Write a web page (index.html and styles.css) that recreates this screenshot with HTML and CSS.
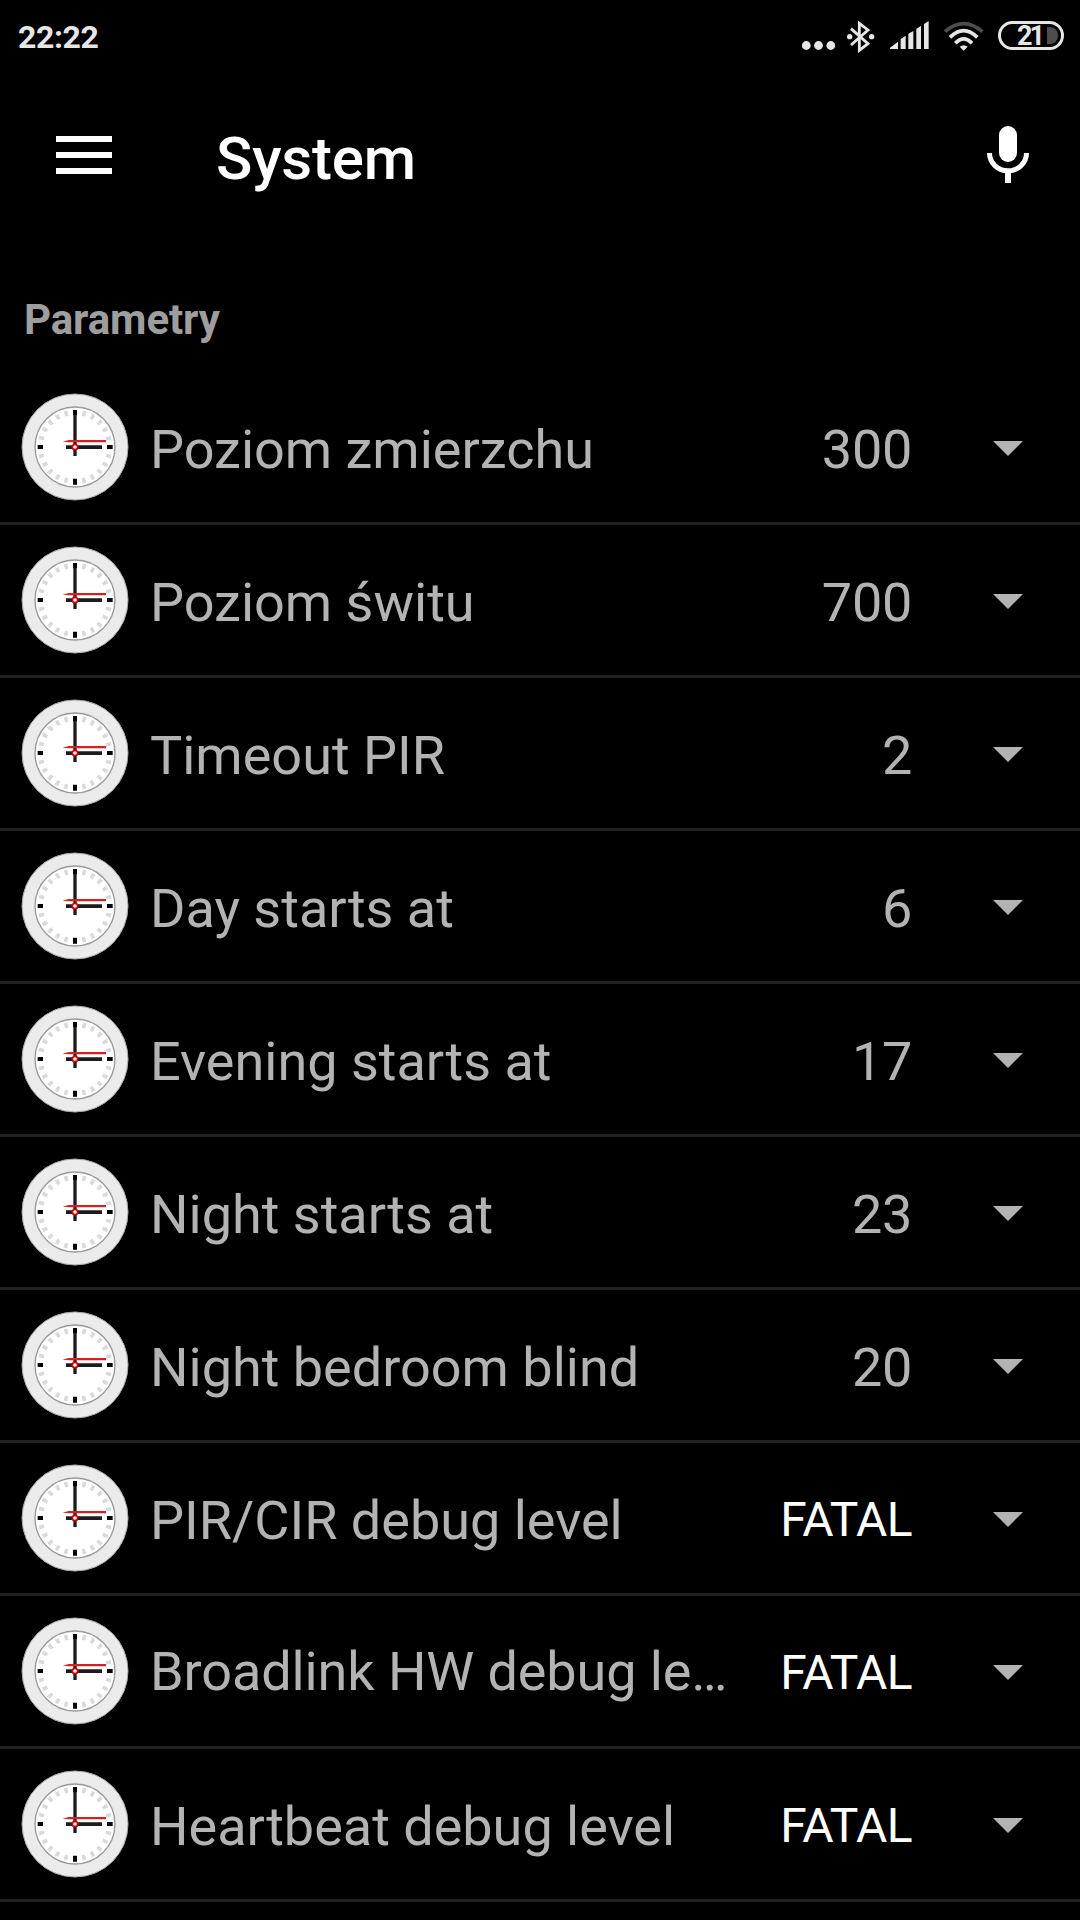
FILE: index.html
```html
<!DOCTYPE html>
<html lang="pl">
<head>
<meta charset="utf-8">
<title>System</title>
<link rel="stylesheet" href="styles.css">
</head>
<body>
<svg class="sprite" aria-hidden="true">
  <symbol id="clock" viewBox="-162 -162 324 324">
    <circle r="159" fill="#ebebeb" stroke="#a8a8a8" stroke-width="3"/>
    <circle r="120" fill="#fff" stroke="#999" stroke-width="4"/>
    <circle r="104" fill="none" stroke="#dadada" stroke-width="16" pathLength="240" stroke-dasharray="4 6" stroke-dashoffset="2"/>
    <path fill="#fff" d="M-10-115h20v24h-20zM-10 91h20v24h-20zM-115-10h24v20h-24zM91-10h24v20h-24z"/>
    <path fill="#000" d="M-6-111H6v16H-6zM-6 95H6v18H-6zM-112-6h16V6h-16zM96-6h17V6H96z"/>
    <path fill="#1c1c20" d="M-5-97H5V27H-5zM-27-5H81V6H-27z"/>
    <path fill="#d42020" d="M-37-16l18-5H93v7H-19z"/>
    <circle r="8" fill="#fff" stroke="#d40000" stroke-width="5"/>
  </symbol>
  <symbol id="arrow" viewBox="0 0 30 15"><path fill="#b3b3b3" d="M0 0h30L15 15z"/></symbol>
</svg>

<header class="status-bar">
  <span class="time">22:22</span>
  <div class="status-icons">
    <svg class="dots" viewBox="0 0 33 9"><g fill="#e6e6e6"><circle cx="4.3" cy="4.5" r="4.4"/><circle cx="16.5" cy="4.5" r="4.4"/><circle cx="28.8" cy="4.5" r="4.4"/></g></svg>
    <svg class="bluetooth" viewBox="0 0 84 99"><path fill="none" stroke="#e6e6e6" stroke-width="8.5" d="M12 26L63 71 37 91V10L63 30 12 75"/><circle cx="8" cy="50" r="8" fill="#e6e6e6"/><circle cx="74" cy="50" r="8" fill="#e6e6e6"/></svg>
    <svg class="signal" viewBox="0 0 117 84"><path fill="#e6e6e6" d="M0 84V80L24 62V84zM32 84V54L47 44V84zM55 84V38L70 30V84zM79 84V24L93 14V84zM102 84V9L116 0V84z"/></svg>
    <svg class="wifi" viewBox="0 0 123 90"><g fill="none" stroke-width="11"><path stroke="#4d4d4d" d="M6 32Q62-16 118 32"/><path stroke="#e6e6e6" d="M21 49Q62 9 103 49M37 67Q62 40 87 67"/></g><path fill="#e6e6e6" d="M50 77Q62 68 74 77L62 89z"/></svg>
    <div class="battery"><span class="battery-text">21</span><span class="battery-rest"></span></div>
  </div>
</header>

<nav class="toolbar">
  <svg class="menu" viewBox="0 0 56 38"><path fill="#fff" d="M0 0h56v6H0zM0 16h56v6H0zM0 32h56v6H0z"/></svg>
  <h1 class="title">System</h1>
  <svg class="mic" viewBox="0 0 42 57"><rect x="12" width="18" height="36" rx="9" fill="#fff"/><path fill="none" stroke="#fff" stroke-width="5" d="M2.5 27a18.5 17.8 0 0 0 37 0"/><path fill="#fff" d="M18 46h6v11h-6z"/></svg>
</nav>

<main>
  <h2 class="section">Parametry</h2>
  <ul class="list">
    <li class="row"><svg class="clock"><use href="#clock"/></svg><span class="label">Poziom zmierzchu</span><span class="value">300</span><svg class="arrow"><use href="#arrow"/></svg></li>
    <li class="row"><svg class="clock"><use href="#clock"/></svg><span class="label">Poziom świtu</span><span class="value">700</span><svg class="arrow"><use href="#arrow"/></svg></li>
    <li class="row"><svg class="clock"><use href="#clock"/></svg><span class="label">Timeout PIR</span><span class="value">2</span><svg class="arrow"><use href="#arrow"/></svg></li>
    <li class="row"><svg class="clock"><use href="#clock"/></svg><span class="label">Day starts at</span><span class="value">6</span><svg class="arrow"><use href="#arrow"/></svg></li>
    <li class="row"><svg class="clock"><use href="#clock"/></svg><span class="label">Evening starts at</span><span class="value">17</span><svg class="arrow"><use href="#arrow"/></svg></li>
    <li class="row"><svg class="clock"><use href="#clock"/></svg><span class="label">Night starts at</span><span class="value">23</span><svg class="arrow"><use href="#arrow"/></svg></li>
    <li class="row"><svg class="clock"><use href="#clock"/></svg><span class="label">Night bedroom blind</span><span class="value">20</span><svg class="arrow"><use href="#arrow"/></svg></li>
    <li class="row"><svg class="clock"><use href="#clock"/></svg><span class="label">PIR/CIR debug level</span><span class="value level">FATAL</span><svg class="arrow"><use href="#arrow"/></svg></li>
    <li class="row"><svg class="clock"><use href="#clock"/></svg><span class="label shortened">Broadlink HW debug le…</span><span class="value level">FATAL</span><svg class="arrow"><use href="#arrow"/></svg></li>
    <li class="row"><svg class="clock"><use href="#clock"/></svg><span class="label">Heartbeat debug level</span><span class="value level">FATAL</span><svg class="arrow"><use href="#arrow"/></svg></li>
  </ul>
</main>
</body>
</html>
```

FILE: styles.css
```css
* { box-sizing: border-box; margin: 0; padding: 0; }

body {
  height: 1920px;
  overflow: hidden;
  background: #000;
  color: #b3b3b3;
  font-family: Roboto, sans-serif;
}

svg { display: block; flex: none; }
.sprite { display: none; }

.status-bar {
  display: flex;
  justify-content: space-between;
  height: 72px;
  padding: 0 16px 0 18px;
  color: #e6e6e6;
}
.time {
  padding-top: 16px;
  font-size: 32px;
  line-height: 42px;
  font-weight: 700;
  letter-spacing: -0.4px;
}
.status-icons { display: flex; align-items: flex-start; padding-top: 20px; }
.dots { width: 33px; height: 9px; margin: 21px 12px 0 0; }
.bluetooth { width: 28px; height: 33px; margin-right: 15px; }
.signal { width: 39px; height: 28px; margin: 1px 14px 0 0; }
.wifi { width: 41px; height: 30px; margin: 1px 14px 0 0; }
.battery {
  display: flex;
  align-items: center;
  justify-content: flex-end;
  width: 66px;
  height: 29px;
  margin-top: 1px;
  padding-right: 3px;
  border: 3px solid #e6e6e6;
  border-radius: 15px;
}
.battery-text {
  padding-top: 2px;
  font-size: 27px;
  line-height: 29px;
  font-weight: 700;
  letter-spacing: -3px;
}
.battery-rest {
  width: 11px;
  height: 17px;
  margin-left: 5px;
  border-radius: 0 8px 8px 0;
  background: #4d4d4d;
}

.toolbar {
  display: flex;
  align-items: flex-start;
  height: 168px;
  padding: 54px 51px 0 56px;
}
.menu { width: 56px; height: 38px; margin-top: 10px; }
.title {
  flex: 1;
  margin: -2px 0 0 104px;
  color: #fff;
  font-size: 60px;
  line-height: 70px;
  font-weight: 500;
  letter-spacing: -0.2px;
}
.mic { width: 42px; height: 57px; }

.section {
  height: 132px;
  padding: 55px 0 0 24px;
  color: #9e9e9e;
  font-size: 42px;
  line-height: 50px;
  font-weight: 700;
  letter-spacing: -0.1px;
}

.list { list-style: none; }
.row {
  display: flex;
  align-items: center;
  height: 153px;
  padding: 0 57px 0 21px;
  border-bottom: 3px solid #212121;
}
.clock { width: 108px; height: 108px; }
.label {
  flex: 1;
  min-width: 0;
  margin: 0 30px 0 21px;
  padding-top: 6px;
  overflow: hidden;
  font-size: 54px;
  line-height: 64px;
  white-space: nowrap;
  text-overflow: ellipsis;
}
.shortened { padding-top: 2px; letter-spacing: -0.1px; }
.value {
  padding-top: 6px;
  font-size: 54px;
  line-height: 64px;
  letter-spacing: -0.3px;
}
.level {
  padding-top: 3px;
  color: #fff;
  font-size: 48px;
  line-height: 56px;
  letter-spacing: -0.6px;
}
.arrow { width: 30px; height: 15px; margin: 3px 0 0 81px; }
```
